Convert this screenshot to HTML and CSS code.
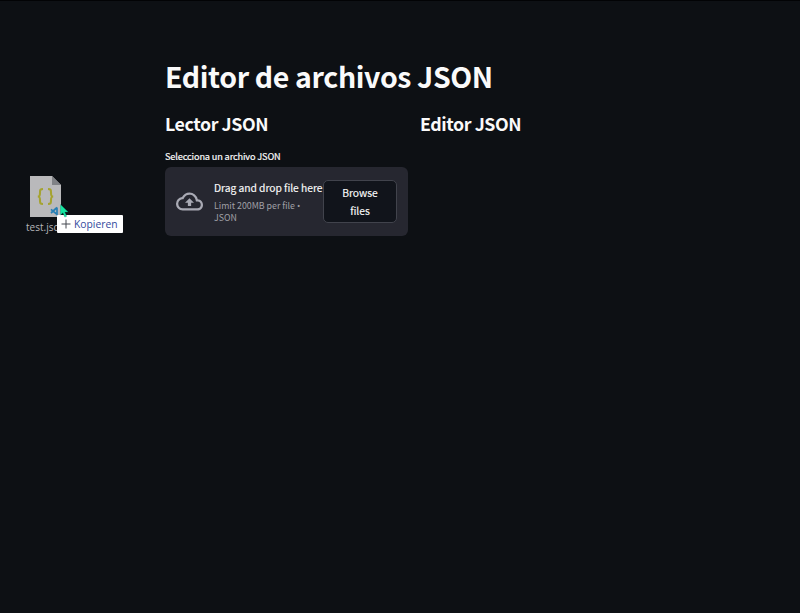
FILE: index.html
```
<!DOCTYPE html>
<html lang="es">
<head>
<meta charset="utf-8">
<title>Editor de archivos JSON</title>
<link rel="stylesheet" href="styles.css">
</head>
<body>
<main class="page">
  <h1>Editor de archivos JSON</h1>
  <div class="columns">
    <section>
      <h2>Lector JSON</h2>
      <div class="label">Selecciona un archivo JSON</div>
      <div class="dropzone">
        <svg class="cloud" viewBox="0 0 24 24"><path fill="#a9aab4" d="M19.35 10.04A7.49 7.49 0 0 0 12 4C9.11 4 6.6 5.64 5.35 8.04A5.994 5.994 0 0 0 0 14c0 3.31 2.69 6 6 6h13c2.76 0 5-2.24 5-5 0-2.64-2.05-4.78-4.65-4.96zM19 18H6c-2.21 0-4-1.79-4-4 0-2.05 1.53-3.76 3.56-3.97l1.07-.11.5-.95A5.469 5.469 0 0 1 12 6c2.62 0 4.88 1.86 5.39 4.43l.3 1.5 1.53.11A2.98 2.98 0 0 1 22 15c0 1.65-1.35 3-3 3zM8 13h2.55v3h2.9v-3H16l-4-4z"/></svg>
        <div class="info">
          <div class="prompt">Drag and drop file here</div>
          <div class="limit">Limit 200MB per file <span class="bullet">•</span><br>JSON</div>
        </div>
        <button class="browse">Browse<br>files</button>
      </div>
    </section>
    <section>
      <h2>Editor JSON</h2>
    </section>
  </div>
</main>
<div class="dragged">
  <svg class="file" viewBox="0 0 32 42">
    <path fill="#b9b9bb" d="M0 0h22l9 9v32H0z"/>
    <path fill="#808286" d="M22 0l9 9h-9z"/>
    <path fill="none" stroke="#a5a331" stroke-width="2.1" d="M13 13c-3 0-3 1-3 3.700 0 2.800-.3 3.800-2.200 3.800 1.900 0 2.200 1 2.200 3.800 0 2.700 0 3.700 3 3.700M18 13c3 0 3 1 3 3.700 0 2.800.3 3.800 2.200 3.800-1.900 0-2.200 1-2.200 3.800 0 2.700 0 3.700-3 3.700"/>
    <path fill="none" stroke="#277fb5" stroke-width="1.700" d="M27 31.500v7l-6-5.200M27 31.500l-6 5.500"/>
  </svg>
  <div class="filename">test.jsc</div>
</div>
<div class="tooltip">
  <svg viewBox="0 0 10 10"><path fill="none" stroke="#444950" d="M5 .5v9M.5 5h9"/></svg>
  <span>Kopieren</span>
</div>
<svg class="cursor" viewBox="0 0 9 14"><path fill="#16e6a0" stroke="#087c66" stroke-width=".3" d="M.5.5v10.500l2.400-2.200 1.900 4.300 1.900-.8-1.900-4.200h3.400z"/></svg>
</body>
</html>
```
FILE: styles.css
```
* { box-sizing: border-box; }
body {
  margin: 0;
  height: 613px;
  overflow: hidden;
  background: #0d1014;
  border-top: 1px solid #020305;
  color: #fafafa;
  font-family: "Noto Sans CJK SC", "Noto Sans", sans-serif;
}
.page { width: 498px; margin: 58px 0 0 165px; }
h1, h2 { margin: 0; font-weight: 700; white-space: nowrap; }
h1 { font-size: 28.500px; line-height: 34px; letter-spacing: -.37px; }
.columns { display: grid; grid-template-columns: 243px 243px; gap: 12px; margin-top: 18px; }
h2 { font-size: 17.800px; line-height: 24px; letter-spacing: -.43px; }
.label {
  margin-top: 14px;
  font-size: 9.200px;
  line-height: 14px;
  letter-spacing: -.14px;
  -webkit-text-stroke: .2px #fafafa;
  white-space: nowrap;
}
.dropzone {
  display: flex;
  align-items: center;
  height: 69px;
  margin-top: 4px;
  padding: 0 12px 0 11px;
  border-radius: 6px;
  background: #262730;
}
.cloud { flex: none; width: 27px; height: 27px; margin-right: 11px; }
.info { flex: none; width: 109px; white-space: nowrap; }
.prompt { font-size: 10.300px; line-height: 18px; letter-spacing: -.04px; -webkit-text-stroke: .15px #fafafa; }
.limit { margin-top: 3px; font-size: 8.800px; line-height: 12px; color: #a0a0a6; }
.bullet { font-family: "Open Sans", sans-serif; }
.browse {
  flex: none;
  width: 74px;
  height: 43px;
  padding: 0;
  border: 1px solid #41434c;
  border-radius: 5px;
  background: #11141b;
  color: #fafafa;
  font: 400 10.300px/18px "Noto Sans CJK SC", "Noto Sans", sans-serif;
  -webkit-text-stroke: .15px #fafafa;
}
.dragged { position: absolute; left: 26px; top: 176px; width: 40px; }
.file { display: block; width: 32px; height: 42px; margin-left: 4px; }
.filename { margin-top: 2px; color: #b6b6b9; font: 10px/14px "Open Sans", sans-serif; }
.tooltip {
  position: absolute;
  left: 57px;
  top: 215px;
  width: 66px;
  height: 18px;
  display: flex;
  align-items: center;
  gap: 3px;
  padding-left: 4px;
  border-radius: 1px;
  background: #fff;
  color: #344a9e;
  font: 10.300px/17px "Open Sans", sans-serif;
}
.tooltip svg { flex: none; width: 10px; height: 10px; }
.cursor { position: absolute; left: 60px; top: 204px; width: 9px; height: 14px; }
```
